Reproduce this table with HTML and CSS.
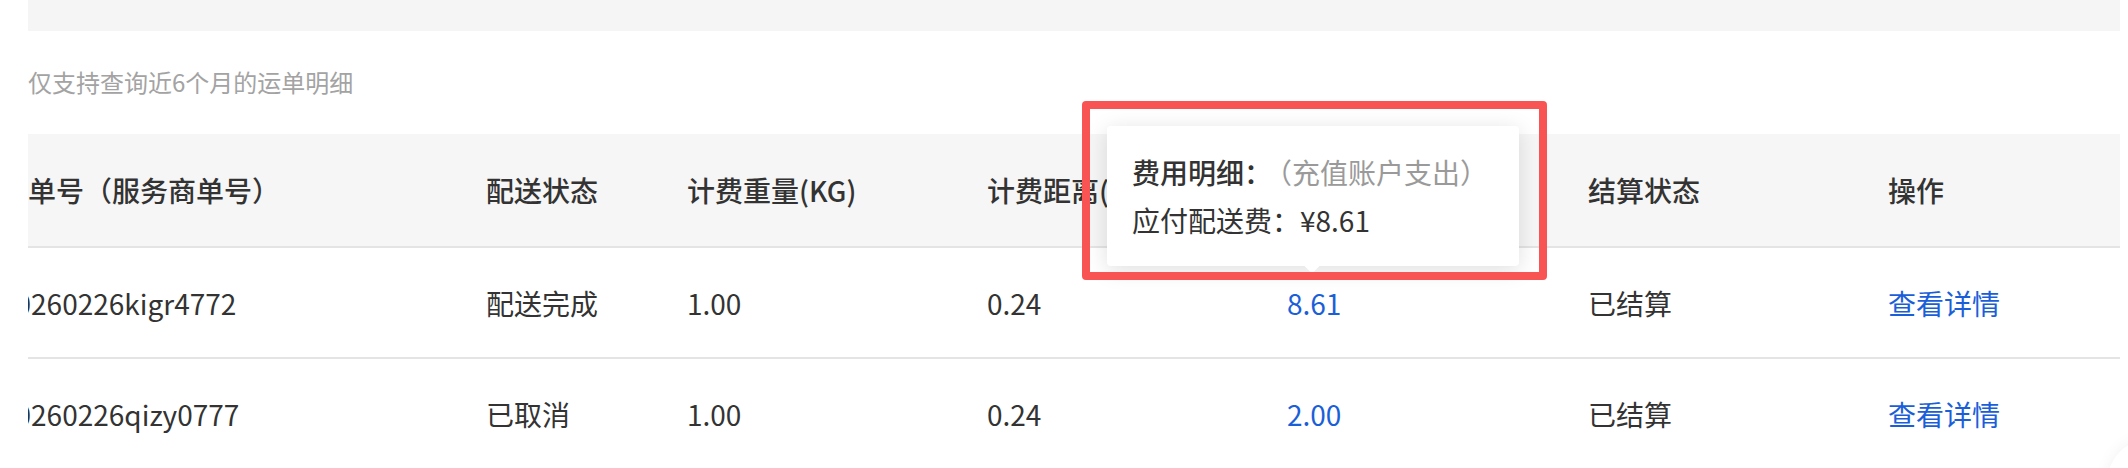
FILE: index.html
```html
<!DOCTYPE html>
<html lang="zh-CN">
<head>
  <meta charset="UTF-8" />
  <meta name="viewport" content="width=device-width, initial-scale=1.0" />
  <title>运单明细</title>
  <link rel="stylesheet" href="styles.css">
</head>
<body>
  <div class="page">
    <div class="filter-bar"></div>
    <p class="tip-text">仅支持查询近6个月的运单明细</p>

    <div class="table-scroll">
      <table class="order-table">
        <colgroup>
          <col class="col-id" />
          <col class="col-status" />
          <col class="col-num" />
          <col class="col-num" />
          <col class="col-fee" />
          <col class="col-num" />
          <col class="col-op" />
        </colgroup>
        <thead>
          <tr>
            <th>运单号（服务商单号）</th>
            <th>配送状态</th>
            <th>计费重量(KG)</th>
            <th>计费距离(KM)</th>
            <th>配送费(元)</th>
            <th>结算状态</th>
            <th>操作</th>
          </tr>
        </thead>
        <tbody>
          <tr>
            <td>20260226kigr4772</td>
            <td>配送完成</td>
            <td>1.00</td>
            <td>0.24</td>
            <td><a class="link" href="#">8.61</a></td>
            <td>已结算</td>
            <td><a class="link" href="#">查看详情</a></td>
          </tr>
          <tr>
            <td>20260226qizy0777</td>
            <td>已取消</td>
            <td>1.00</td>
            <td>0.24</td>
            <td><a class="link" href="#">2.00</a></td>
            <td>已结算</td>
            <td><a class="link" href="#">查看详情</a></td>
          </tr>
        </tbody>
      </table>
    </div>

    <!-- fee popover over the first row -->
    <div class="fee-popover">
      <p class="fee-title">费用明细：<span class="fee-source">（充值账户支出）</span></p>
      <p>应付配送费：¥8.61</p>
    </div>
    <div class="mark-box"></div>
    <div class="float-btn"></div>
  </div>
</body>
</html>
```

FILE: styles.css
```css
/* Base Reset & Typography */
* { margin: 0; padding: 0; box-sizing: border-box; }
body {
  font-family: "Noto Sans CJK SC", "Noto Sans", sans-serif;
  background: #fff;
  color: #333;
  overflow: hidden;
}
.page {
  position: relative;
  padding: 0 8px 0 28px;
  height: 468px;
}

/* Top filter strip */
.filter-bar {
  height: 31px;
  background: #f5f5f5;
}
.tip-text {
  margin-top: 34px;
  font-size: 24px;
  line-height: 34px;
  color: #a3a3a3;
}

/* Table (scrolled a little to the right) */
.table-scroll {
  margin-top: 35px;
  overflow: hidden;
}
.order-table {
  margin-left: -44px;
  width: 2136px;
  border-collapse: collapse;
  table-layout: fixed;
  font-size: 28px;
}
.col-id { width: 486px; }
.col-status { width: 201px; }
.col-num { width: 300px; }
.col-fee { width: 301px; }
.col-op { width: 248px; }
.order-table th,
.order-table td {
  padding: 0 16px;
  text-align: left;
  white-space: nowrap;
  border-bottom: 2px solid #e4e4e4;
}
.order-table th {
  height: 113px;
  background: #f6f6f6;
  font-weight: 500;
  color: #333;
}
.order-table td {
  height: 111px;
  font-weight: 400;
}
.link {
  color: #1b5fd8;
  text-decoration: none;
}

/* Popover */
.fee-popover {
  position: absolute;
  left: 1107px;
  top: 126px;
  width: 412px;
  height: 140px;
  padding: 22px 25px;
  background: #fff;
  border-radius: 4px;
  box-shadow: 0 4px 22px rgba(0, 0, 0, 0.13);
  font-size: 28px;
  line-height: 48px;
  color: #333;
  white-space: nowrap;
}
.fee-popover::after {
  content: "";
  position: absolute;
  left: 199px;
  bottom: -5px;
  width: 12px;
  height: 12px;
  background: #fff;
  transform: rotate(45deg);
}
.fee-title { font-weight: 500; }
.fee-source {
  margin-left: 6px;
  font-weight: 400;
  color: #9a9a9a;
}

/* Red annotation frame */
.mark-box {
  position: absolute;
  left: 1082px;
  top: 101px;
  width: 465px;
  height: 179px;
  border: 8px solid #f95454;
  border-radius: 4px;
}

/* Floating button peeking in the corner */
.float-btn {
  position: absolute;
  left: 2108px;
  top: 440px;
  width: 80px;
  height: 80px;
  border-radius: 50%;
  background: #fff;
  box-shadow: 0 0 16px rgba(0, 0, 0, 0.06);
}
```
